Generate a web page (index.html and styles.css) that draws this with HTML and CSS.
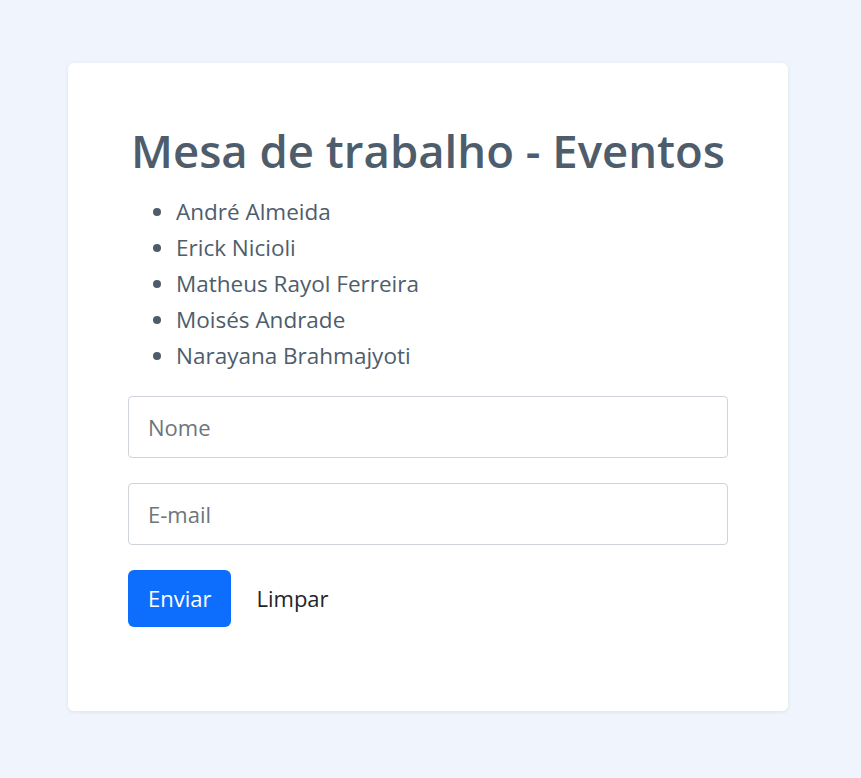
FILE: index.html
```html
<!DOCTYPE html>
<html lang="pt-BR">
<head>
<meta charset="utf-8">
<title>Mesa de trabalho - Eventos</title>
<link rel="stylesheet" href="styles.css">
</head>
<body>
<main class="page">
  <section class="card">
    <h1 class="title">Mesa de trabalho - Eventos</h1>
    <ul class="members">
      <li>André Almeida</li>
      <li>Erick Nicioli</li>
      <li>Matheus Rayol Ferreira</li>
      <li>Moisés Andrade</li>
      <li>Narayana Brahmajyoti</li>
    </ul>
    <form class="form">
      <input class="field" type="text" placeholder="Nome">
      <input class="field" type="email" placeholder="E-mail">
      <div class="actions">
        <button class="btn btn-primary" type="button">Enviar</button>
        <button class="btn btn-link" type="reset">Limpar</button>
      </div>
    </form>
  </section>
</main>
</body>
</html>
```
FILE: styles.css
```css
* { box-sizing: border-box; }
html, body { margin: 0; padding: 0; }
body {
  background: #f0f5fd;
  font-family: "Open Sans", "Noto Sans", sans-serif;
  color: #4e5d6c;
  min-height: 778px;
}
.page {
  padding: 63px 73px 67px 68px;
}
.card {
  width: 720px;
  height: 648px;
  background: #fff;
  border-radius: 6px;
  box-shadow: 0 1px 4px rgba(0, 0, 0, 0.08);
  padding: 60px;
}
.title {
  margin: 0;
  text-align: center;
  font-size: 45.5px;
  font-weight: 600;
  line-height: 1.2;
  color: #4e5d6c;
}
.members {
  margin: 16px 0 22px;
  padding-left: 48px;
  font-size: 22.5px;
  line-height: 36px;
}
.members li::marker { color: #4e5d6c; }
.form {
  display: flex;
  flex-direction: column;
  gap: 25px;
}
.field {
  display: block;
  width: 100%;
  height: 62px;
  padding: 0 19px;
  border: 1px solid #ced4da;
  border-radius: 4px;
  font-family: inherit;
  font-size: 22px;
  color: #212529;
  background: #fff;
}
.field::placeholder { color: #6c757d; }
.actions {
  display: flex;
  align-items: center;
  gap: 4px;
  margin-top: 0;
}
.btn {
  font-family: inherit;
  font-size: 22px;
  line-height: 33px;
  border: 1px solid transparent;
  border-radius: 6px;
  padding: 11px 19px;
  cursor: pointer;
  background: none;
}
.btn-primary {
  background: #0d6efd;
  color: #fff;
}
.btn-link {
  color: #212529;
  padding: 11px 20px;
}
```
